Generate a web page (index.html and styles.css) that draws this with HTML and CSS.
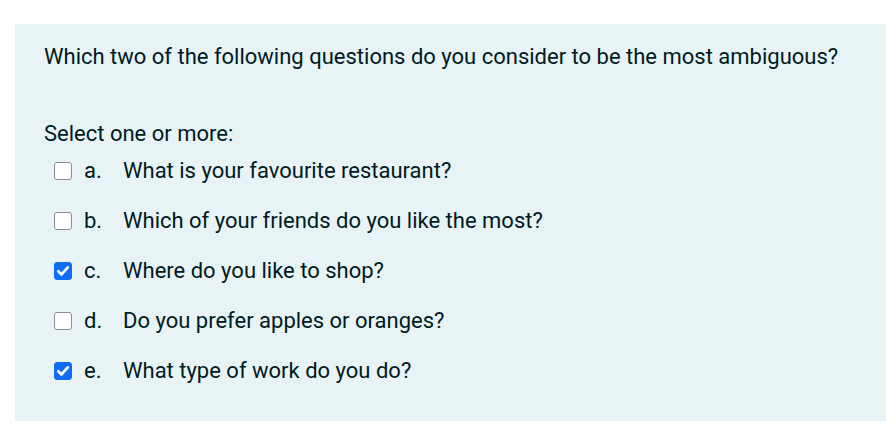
FILE: index.html
```html
<!DOCTYPE html>
<html>
<head>
<meta charset="utf-8">
<link rel="stylesheet" href="styles.css">
</head>
<body>
<div class="formulation">
  <div class="qtext">Which two of the following questions do you consider to be the most ambiguous?</div>
  <div class="prompt">Select one or more:</div>
  <div class="answers">
    <div class="row"><span class="box"></span><span class="letter">a.</span><span class="text">What is your favourite restaurant?</span></div>
    <div class="row"><span class="box"></span><span class="letter">b.</span><span class="text">Which of your friends do you like the most?</span></div>
    <div class="row"><span class="box checked"><svg viewBox="0 0 18 18" width="18" height="18"><path d="M4.3 9.2 L7.5 12.4 L13.8 5.4" fill="none" stroke="#fff" stroke-width="2.8" stroke-linecap="round" stroke-linejoin="round"/></svg></span><span class="letter">c.</span><span class="text">Where do you like to shop?</span></div>
    <div class="row"><span class="box"></span><span class="letter">d.</span><span class="text">Do you prefer apples or oranges?</span></div>
    <div class="row"><span class="box checked"><svg viewBox="0 0 18 18" width="18" height="18"><path d="M4.3 9.2 L7.5 12.4 L13.8 5.4" fill="none" stroke="#fff" stroke-width="2.8" stroke-linecap="round" stroke-linejoin="round"/></svg></span><span class="letter">e.</span><span class="text">What type of work do you do?</span></div>
  </div>
</div>
</body>
</html>
```
FILE: styles.css
```css
html, body {
  margin: 0;
  padding: 0;
  background: #ffffff;
}
body {
  font-family: Roboto, "Liberation Sans", sans-serif;
  font-size: 22px;
  line-height: 30px;
  color: #001a1e;
  padding: 24px 0 0 15px;
}
.formulation {
  background: #e7f3f5;
  height: 397px;
  box-sizing: border-box;
  padding: 18px 0 0 29px;
}
.qtext {
  margin-bottom: 47px;
}
.prompt {
  margin-bottom: 7px;
}
.answers {
  display: flex;
  flex-direction: column;
  gap: 20px;
}
.row {
  display: flex;
  align-items: center;
  height: 30px;
}
.box {
  width: 18px;
  height: 18px;
  box-sizing: border-box;
  border: 1.5px solid #8a8d91;
  border-radius: 3px;
  background: #ffffff;
  margin-left: 10px;
  margin-right: 12px;
  position: relative;
}
.box.checked {
  background: #0f6cf5;
  border-color: #0f6cf5;
}
.box svg {
  position: absolute;
  left: -1.5px;
  top: -1.5px;
}
.letter {
  width: 39px;
}
```
